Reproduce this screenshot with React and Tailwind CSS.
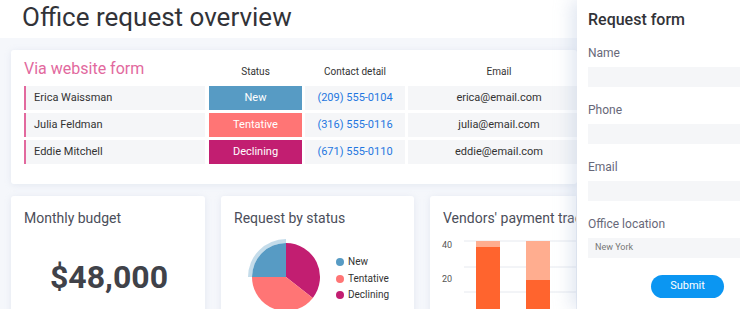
import React from "react";

const rows = [
  { name: "Erica Waissman", status: "New", color: "bg-[#579bc4]", phone: "(209) 555-0104", email: "erica@email.com" },
  { name: "Julia Feldman", status: "Tentative", color: "bg-[#ff7575]", phone: "(316) 555-0116", email: "julia@email.com" },
  { name: "Eddie Mitchell", status: "Declining", color: "bg-[#c21e71]", phone: "(671) 555-0110", email: "eddie@email.com" },
];

const fields = ["Name", "Phone", "Email"];

const PieChart = () => {
  const cx = 65;
  const cy = 81;
  const r = 34;
  const pt = (deg, rad) => {
    const a = (deg * Math.PI) / 180;
    return [cx + rad * Math.sin(a), cy - rad * Math.cos(a)];
  };
  const slice = (a0, a1, color) => {
    const [x0, y0] = pt(a0, r);
    const [x1, y1] = pt(a1, r);
    const large = a1 - a0 > 180 ? 1 : 0;
    return <path d={`M${cx} ${cy} L${x0} ${y0} A${r} ${r} 0 ${large} 1 ${x1} ${y1} Z`} fill={color} />;
  };
  const [ox0, oy0] = pt(270, 38);
  const [ox1, oy1] = pt(360, 38);
  const [ix1, iy1] = pt(360, 34);
  const [ix0, iy0] = pt(270, 34);
  return (
    <svg width="193" height="113" className="absolute left-0 top-0">
      <path
        d={`M${ox0} ${oy0} A38 38 0 0 1 ${ox1} ${oy1} L${ix1} ${iy1} A34 34 0 0 0 ${ix0} ${iy0} Z`}
        fill="#579bc4"
        opacity="0.35"
      />
      {slice(0, 128, "#c21e71")}
      {slice(128, 270, "#ff7575")}
      {slice(270, 360, "#579bc4")}
      <circle cx="119" cy="66" r="4" fill="#579bc4" />
      <circle cx="119" cy="83" r="4" fill="#ff7575" />
      <circle cx="119" cy="99" r="4" fill="#c21e71" />
    </svg>
  );
};

const BarChart = () => (
  <svg width="160" height="113" className="absolute left-0 top-0">
    <line x1="34" y1="45" x2="160" y2="45" stroke="#e6e9ef" />
    <line x1="34" y1="71" x2="160" y2="71" stroke="#e6e9ef" />
    <line x1="34" y1="96" x2="160" y2="96" stroke="#e6e9ef" />
    <text x="12" y="52" fontSize="9" fill="#555" fontFamily="Roboto, sans-serif">40</text>
    <text x="12" y="86" fontSize="9" fill="#555" fontFamily="Roboto, sans-serif">20</text>
    <rect x="46" y="45" width="24" height="6" fill="#ffad8f" />
    <rect x="46" y="51" width="24" height="70" fill="#ff642e" />
    <rect x="96" y="45" width="24" height="39" fill="#ffad8f" />
    <rect x="96" y="84" width="24" height="40" fill="#ff642e" />
  </svg>
);

export default function App() {
  return (
    <div className="relative w-[740px] h-[309px] overflow-hidden bg-[#f5f7fb] font-['Roboto',sans-serif]">
      <div className="h-[38px] bg-white pl-[22px] pt-[1px]">
        <h1 className="text-[26px] leading-[32px] text-[#323338]">Office request overview</h1>
      </div>

      <div className="pl-[11px] pt-[12px] flex flex-col gap-[12px]">
        <div className="w-[566px] h-[134px] overflow-hidden bg-white rounded-[3px] shadow-[0_1px_6px_rgba(180,190,215,0.25)] pl-[13px] pt-[7px]">
          <div className="flex items-end h-[26px] shrink-0">
            <div className="w-[181px] shrink-0 text-[16px] leading-[24px] text-[#e2699e] pb-[2px]">Via website form</div>
            <div className="ml-[4px] w-[93px] shrink-0 text-center text-[10px] text-[#333] pb-[4px]">Status</div>
            <div className="ml-[3px] w-[100px] shrink-0 text-center text-[10px] text-[#333] pb-[4px]">Contact detail</div>
            <div className="ml-[3px] w-[182px] shrink-0 text-center text-[10px] text-[#333] pb-[4px]">Email</div>
          </div>
          <div className="mt-[3px] flex flex-col gap-[3px]">
            {rows.map((r) => (
              <div key={r.name} className="flex h-[24px] text-[11px]">
                <div className="w-[2px] shrink-0 bg-[#e2699e]" />
                <div className="w-[179px] shrink-0 bg-[#f5f6f8] pl-[8px] flex items-center text-[#333]">{r.name}</div>
                <div className={`ml-[4px] w-[93px] shrink-0 ${r.color} flex items-center justify-center text-white`}>{r.status}</div>
                <div className="ml-[3px] w-[100px] shrink-0 bg-[#f5f6f8] flex items-center justify-center text-[#1f76e0]">{r.phone}</div>
                <div className="ml-[3px] w-[182px] shrink-0 bg-[#f5f6f8] flex items-center justify-center text-[#333]">{r.email}</div>
              </div>
            ))}
          </div>
        </div>

        <div className="flex gap-[16px]">
          <div className="w-[194px] h-[130px] bg-white rounded-[3px] shadow-[0_1px_6px_rgba(180,190,215,0.25)] pl-[13px] pt-[13px]">
            <div className="text-[14px] leading-[18px] text-[#4b4e5a]">Monthly budget</div>
            <div className="mt-[32px] pl-[26px] text-[32px] leading-[36px] font-bold text-[#404249]">$48,000</div>
          </div>
          <div className="relative w-[193px] h-[130px] bg-white rounded-[3px] shadow-[0_1px_6px_rgba(180,190,215,0.25)]">
            <PieChart />
            <div className="relative pl-[13px] pt-[13px] text-[14px] leading-[18px] text-[#4b4e5a]">Request by status</div>
            <div className="absolute left-[127px] top-[59px] flex flex-col gap-[2px] text-[10px] leading-[14.5px] text-[#333]">
              <span>New</span>
              <span>Tentative</span>
              <span>Declining</span>
            </div>
          </div>
          <div className="relative w-[146px] h-[130px] overflow-hidden bg-white rounded-l-[3px] shadow-[0_1px_6px_rgba(180,190,215,0.25)]">
            <BarChart />
            <div className="relative pl-[13px] pt-[13px] text-[14px] leading-[18px] text-[#4b4e5a] whitespace-nowrap">Vendors' payment tracking</div>
          </div>
        </div>
      </div>

      <div className="absolute right-0 top-0 w-[163px] h-[309px] bg-white shadow-[-6px_0_16px_rgba(170,185,215,0.35)] pl-[11px]">
        <div className="pt-[10px] text-[16px] leading-[20px] font-medium text-[#323338]">Request form</div>
        <div className="mt-[16px] flex flex-col">
          {fields.map((f) => (
            <div key={f} className="h-[57px]">
              <div className="text-[12px] leading-[14px] text-[#676879]">{f}</div>
              <div className="mt-[7px] h-[20px] bg-[#f5f6f8]" />
            </div>
          ))}
          <div>
            <div className="text-[12px] leading-[14px] text-[#676879]">Office location</div>
            <div className="mt-[7px] h-[20px] bg-[#f5f6f8] pl-[7px] flex items-center text-[9px] text-[#777]">New York</div>
          </div>
        </div>
        <div className="mt-[17px] ml-[63px] w-[73px] h-[23px] rounded-full bg-[#0b96f2] flex items-center justify-center text-[11px] text-white">Submit</div>
      </div>
    </div>
  );
}
